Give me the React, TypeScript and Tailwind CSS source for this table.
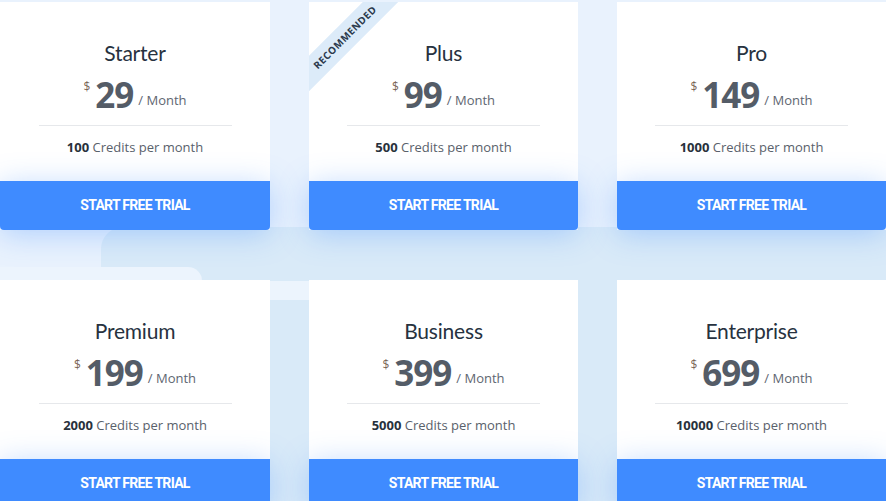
import React from "react";

const plans = [
  { name: "Starter", price: "29", credits: "100" },
  { name: "Plus", price: "99", credits: "500", recommended: true },
  { name: "Pro", price: "149", credits: "1000" },
  { name: "Premium", price: "199", credits: "2000" },
  { name: "Business", price: "399", credits: "5000" },
  { name: "Enterprise", price: "699", credits: "10000" },
];

function PlanCard({ plan }: { plan: (typeof plans)[number] }) {
  return (
    <div className="relative flex flex-col bg-white">
      {plan.recommended && (
        <div className="pointer-events-none absolute inset-0 overflow-hidden">
          <div className="absolute left-[-34px] top-[23px] flex h-[25px] w-[140px] -rotate-45 items-center justify-center bg-[#dcebf9]">
            <span className="font-['Open_Sans'] text-[10px] font-bold tracking-[0.4px] text-[#2b3a4c]">
              RECOMMENDED
            </span>
          </div>
        </div>
      )}
      <div className="flex flex-col items-center pt-[37px] pb-[24px]">
        <h3 className="font-['Lato'] text-[21px] leading-[27px] font-normal tracking-[-0.2px] text-[#27323f]">
          {plan.name}
        </h3>
        <div className="mt-[6px] flex h-[44px] items-center">
          <span className="mr-[5px] -mt-[15px] font-['Open_Sans'] text-[12px] text-[#7b6656]">$</span>
          <span className="font-['Open_Sans'] text-[35px] leading-none font-bold tracking-[-1px] text-[#545c67]">
            {plan.price}
          </span>
          <span className="ml-[5px] mt-[13px] font-['Open_Sans'] text-[13px] text-[#5e6671]">/ Month</span>
        </div>
        <div className="mt-[9px] h-px w-[193px] bg-[#e6e8eb]" />
        <p className="mt-[11px] font-['Open_Sans'] text-[13px] leading-[20px] text-[#59616b]">
          <span className="font-bold text-[#28313c]">{plan.credits}</span> Credits per month
        </p>
      </div>
      <button className="relative h-[49px] w-full rounded-b-[4px] bg-[#3f8bff] font-['Roboto'] text-[14px] font-bold tracking-[-0.7px] text-white shadow-[0_4px_30px_rgba(63,139,255,0.35)]">
        START FREE TRIAL
      </button>
    </div>
  );
}

export default function App() {
  return (
    <div className="relative h-[501px] w-[886px] overflow-hidden bg-[#e9f2fd]">
      {/* background shapes */}
      <div className="absolute left-[101px] top-[227px] h-[300px] w-[800px] rounded-l-[22px] bg-[#d9eaf8]" />
      <div className="absolute left-0 top-[267px] h-[240px] w-[202px] rounded-tr-[14px] bg-[#ecf4fd]" />
      <div className="absolute left-[202px] top-[281px] h-[19px] w-[110px] bg-[#ecf4fd]" />

      <div className="relative grid grid-cols-[270px_269px_269px] gap-x-[39px] gap-y-[50px] pt-[2px]">
        {plans.map((p) => (
          <PlanCard key={p.name} plan={p} />
        ))}
      </div>
    </div>
  );
}
